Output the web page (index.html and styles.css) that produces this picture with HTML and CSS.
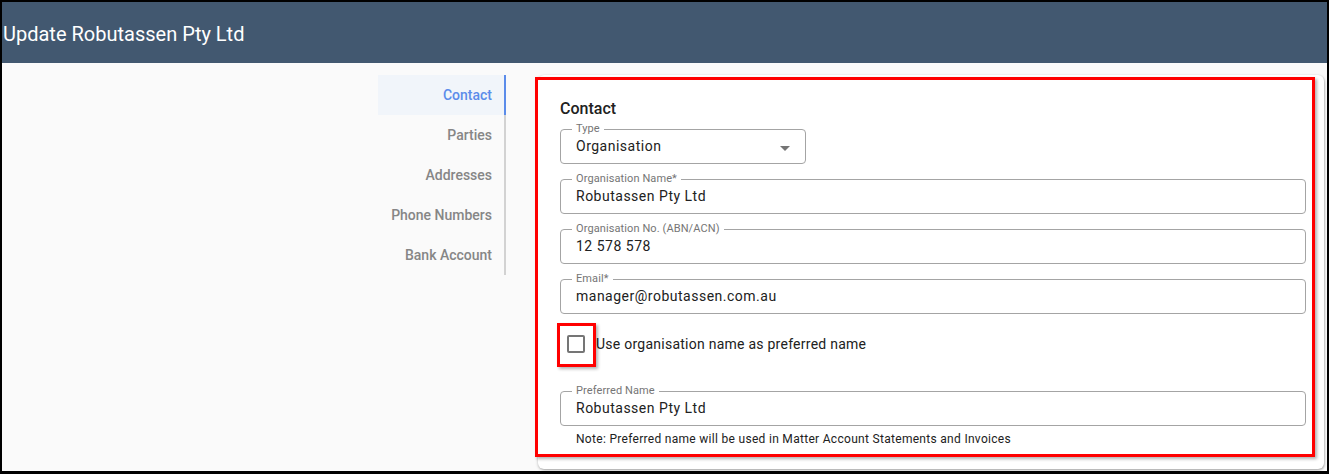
FILE: index.html
```html
<!DOCTYPE html>
<html lang="en">
<head>
<meta charset="utf-8">
<title>Update Robutassen Pty Ltd</title>
<link rel="stylesheet" href="styles.css">
</head>
<body>
<div class="frame">
  <header class="topbar">
    <h1 class="title">Update Robutassen Pty Ltd</h1>
  </header>
  <main class="main">
    <nav class="sidenav">
      <a class="navitem active">Contact</a>
      <a class="navitem">Parties</a>
      <a class="navitem">Addresses</a>
      <a class="navitem">Phone Numbers</a>
      <a class="navitem">Bank Account</a>
    </nav>
    <section class="card">
      <h2 class="card-title">Contact</h2>
      <fieldset class="field field-select">
        <legend>Type</legend>
        <div class="value">Organisation</div>
        <svg class="caret" width="10" height="5" viewBox="0 0 10 5"><path d="M0 0h10L5 5z" fill="#757575"/></svg>
      </fieldset>
      <fieldset class="field">
        <legend>Organisation Name*</legend>
        <div class="value">Robutassen Pty Ltd</div>
      </fieldset>
      <fieldset class="field">
        <legend>Organisation No. (ABN/ACN)</legend>
        <div class="value">12 578 578</div>
      </fieldset>
      <fieldset class="field">
        <legend>Email*</legend>
        <div class="value">manager@robutassen.com.au</div>
      </fieldset>
      <label class="check-row">
        <span class="check-wrap">
          <span class="checkbox"></span>
          <span class="mark-box"></span>
        </span>
        <span class="check-label">Use organisation name as preferred name</span>
      </label>
      <fieldset class="field field-pref">
        <legend>Preferred Name</legend>
        <div class="value">Robutassen Pty Ltd</div>
      </fieldset>
      <p class="note">Note: Preferred name will be used in Matter Account Statements and Invoices</p>
    </section>
    <div class="mark-card"></div>
  </main>
</div>
</body>
</html>
```

FILE: styles.css
```css
* { box-sizing: border-box; }
html, body { margin: 0; padding: 0; }
body {
  font-family: Roboto, "Liberation Sans", Arial, sans-serif;
  background: #000;
}
.frame {
  width: 1329px;
  height: 474px;
  border-style: solid;
  border-color: #000;
  border-width: 2px 2px 3px 2px;
  background: #fafafa;
  overflow: hidden;
  display: flex;
  flex-direction: column;
}
.topbar {
  height: 61px;
  flex: none;
  background: #425870;
  display: flex;
  align-items: center;
  padding-left: 1px;
}
.title {
  margin: 0;
  font-size: 20px;
  font-weight: 400;
  color: #fff;
  line-height: 24px;
  padding-top: 2px;
}
.main {
  position: relative;
  flex: 1;
  display: flex;
  align-items: flex-start;
  padding: 12px 0 0 376px;
  gap: 32px;
}
.sidenav {
  width: 128px;
  flex: none;
  display: flex;
  flex-direction: column;
  position: relative;
}
.sidenav::after {
  content: "";
  position: absolute;
  right: 0;
  top: 0;
  width: 2px;
  height: 200px;
  background: #d2d2d2;
}
.navitem {
  height: 40px;
  display: flex;
  align-items: center;
  justify-content: flex-end;
  padding-right: 14px;
  padding-bottom: 1px;
  font-size: 14px;
  font-weight: 500;
  color: #868686;
  position: relative;
}
.navitem.active {
  color: #5b8cea;
  background: #f1f5fa;
}
.navitem.active::after {
  content: "";
  position: absolute;
  right: 0;
  top: 0;
  bottom: 0;
  width: 2px;
  background: #5b8cea;
  z-index: 1;
}
.card {
  width: 786px;
  flex: none;
  background: #fff;
  border-radius: 6px;
  box-shadow: 0 1px 3px rgba(0,0,0,0.25), 1px 1px 2px rgba(0,0,0,0.15);
  padding: 24px 18px 22px 22px;
}
.card-title {
  margin: 0 0 4px 0;
  font-size: 16px;
  font-weight: 500;
  line-height: 20px;
  color: #212121;
}
.field {
  margin: 9px 0 0 0;
  padding: 0 15px 0 11px;
  border: 1px solid #a4a4a4;
  border-radius: 4px;
  min-width: 0;
  position: relative;
}
.card-title + .field { margin-top: 0; }
.field legend {
  font-size: 11px;
  line-height: 12px;
  color: #757575;
  padding: 0 4px;
  letter-spacing: 0.1px;
}
.field .value {
  font-size: 14px;
  line-height: 20px;
  padding: 1px 0 7px 4px;
  color: #212121;
  letter-spacing: 0.5px;
}
.field-select {
  width: 246px;
}
.caret {
  position: absolute;
  right: 15px;
  top: 11px;
}
.check-row {
  display: flex;
  align-items: center;
  height: 40px;
  margin-top: 10px;
}
.check-wrap {
  position: relative;
  width: 36px;
  height: 40px;
  display: flex;
  align-items: center;
  justify-content: flex-start;
  padding-left: 7px;
}
.checkbox {
  width: 18px;
  height: 18px;
  border: 2px solid #757575;
  border-radius: 2px;
}
.mark-box {
  position: absolute;
  left: -3px;
  top: -1px;
  width: 39px;
  height: 44px;
  border: 3px solid #ff0000;
  box-shadow: 2px 2px 3px rgba(0,0,0,0.3);
}
.check-label {
  font-size: 14px;
  color: #212121;
  letter-spacing: 0.25px;
}
.field-pref { margin-top: 21px; }
.note {
  margin: 5px 0 0 16px;
  font-size: 12px;
  line-height: 16px;
  color: #212121;
  letter-spacing: 0.3px;
}
.mark-card {
  position: absolute;
  left: 533px;
  top: 14px;
  width: 780px;
  height: 380px;
  border: 3px solid #ff0000;
  box-shadow: 2px 2px 3px rgba(0,0,0,0.3);
  pointer-events: none;
}
```
